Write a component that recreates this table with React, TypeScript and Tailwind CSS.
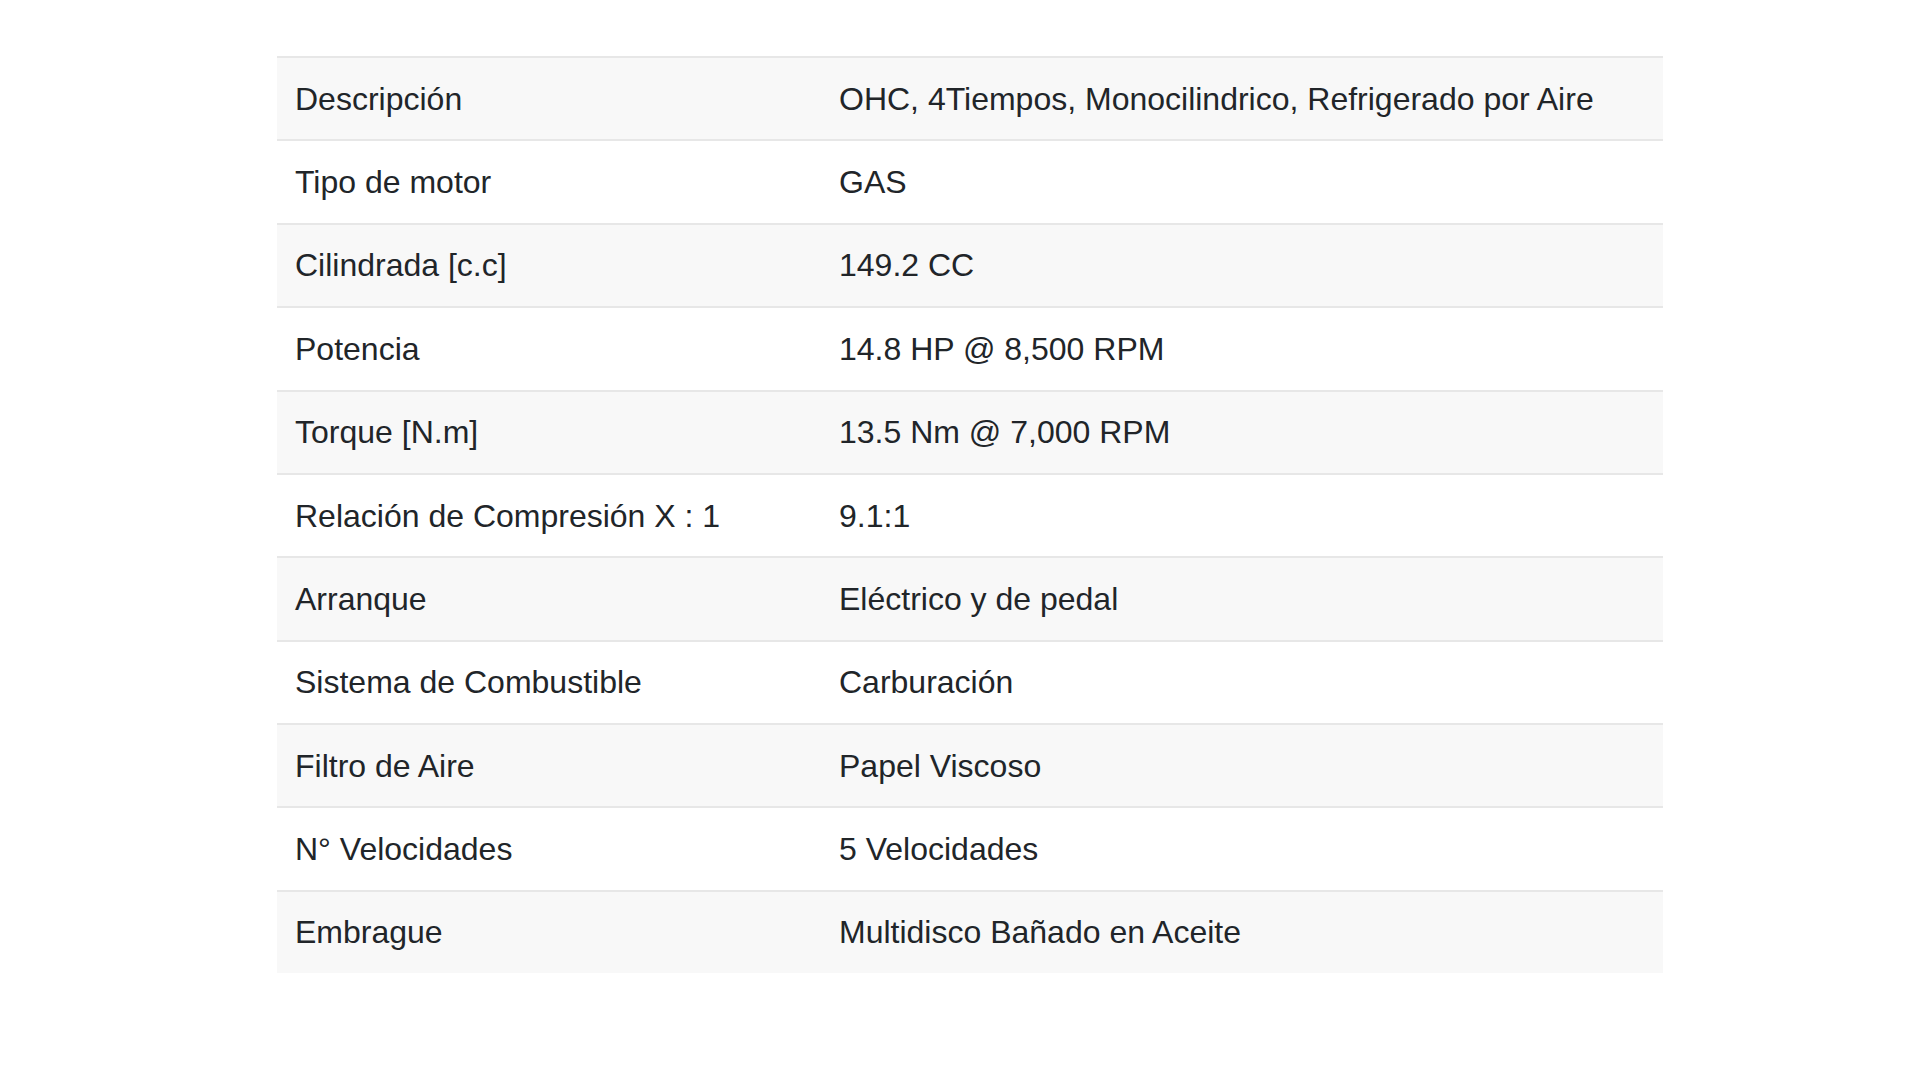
const specs: [string, string][] = [
  ["Descripción", "OHC, 4Tiempos, Monocilindrico, Refrigerado por Aire"],
  ["Tipo de motor", "GAS"],
  ["Cilindrada [c.c]", "149.2 CC"],
  ["Potencia", "14.8 HP @ 8,500 RPM"],
  ["Torque [N.m]", "13.5 Nm @ 7,000 RPM"],
  ["Relación de Compresión X : 1", "9.1:1"],
  ["Arranque", "Eléctrico y de pedal"],
  ["Sistema de Combustible", "Carburación"],
  ["Filtro de Aire", "Papel Viscoso"],
  ["N° Velocidades", "5 Velocidades"],
  ["Embrague", "Multidisco Bañado en Aceite"],
];

export default function App() {
  return (
    <div className="min-h-screen bg-white pt-[56px] pl-[277px] font-['Liberation_Sans',Arial,sans-serif] text-[#212529]">
      <table className="w-[1386px] border-collapse text-[32px]">
        <tbody>
          {specs.map(([label, value], i) => (
            <tr key={label} className={i % 2 === 0 ? "bg-[#f8f8f8]" : "bg-white"}>
              <td className="w-[544px] border-t-2 border-[#e7e7e7] px-[18px] py-[16.7px] leading-[48px]">{label}</td>
              <td className="border-t-2 border-[#e7e7e7] px-[18px] py-[16.7px] leading-[48px]">{value}</td>
            </tr>
          ))}
        </tbody>
      </table>
    </div>
  );
}
